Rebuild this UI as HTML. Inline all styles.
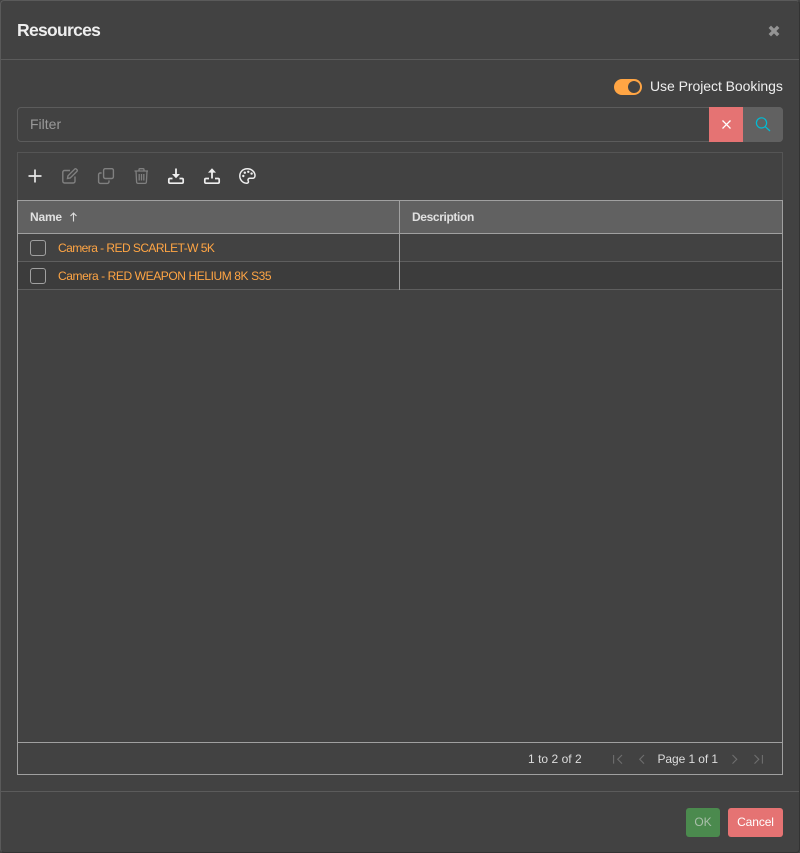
<!DOCTYPE html>
<html><head><meta charset="utf-8"><style>
html,body{margin:0;padding:0;width:800px;height:853px;overflow:hidden;background:#424242;font-family:"Liberation Sans",sans-serif}
.a{position:absolute;white-space:nowrap}
#m{position:absolute;left:0;top:0;width:798px;height:851px;border:1px solid #5a5a5a;border-right-color:#333;border-bottom-color:#333;border-radius:4px;box-sizing:content-box}
svg{position:absolute;overflow:visible;fill:none}
</style></head><body>
<div id="m"></div>
<div class="a" style="left:17px;top:20px;font-size:17.5px;line-height:21px;font-weight:bold;color:#eee;letter-spacing:-.7px">Resources</div>
<svg style="left:768px;top:25px" width="12" height="12" viewBox="0 0 12 12"><path d="M1.8 1.8 10.2 10.2M10.2 1.8 1.8 10.2" stroke="#949494" stroke-width="3.4"/></svg>
<div class="a" style="left:1px;top:59px;width:798px;height:1px;background:#5b5b5b"></div>

<div class="a" style="left:614px;top:79px;width:28px;height:16px;border-radius:8px;background:#ffa544"></div>
<div class="a" style="left:628px;top:81px;width:12px;height:12px;border-radius:6px;background:#424242"></div>
<div class="a" style="left:650px;top:78px;font-size:14px;line-height:16px;color:#eee;letter-spacing:-.05px">Use Project Bookings</div>

<div class="a" style="left:17px;top:107px;width:766px;height:35px;box-sizing:border-box;border:1px solid #5c5c5c;border-radius:4px"></div>
<div class="a" style="left:30px;top:116px;font-size:14px;line-height:16px;color:#999">Filter</div>
<div class="a" style="left:709px;top:107px;width:34px;height:35px;background:#e57373"></div>
<div class="a" style="left:743px;top:107px;width:40px;height:35px;background:#616161;border-radius:0 4px 4px 0"></div>
<svg style="left:722px;top:120px" width="9" height="9" viewBox="0 0 9 9"><path d="M.5 .5 8.5 8.5M8.5 .5 .5 8.5" stroke="#fff" stroke-width="1.3"/></svg>
<svg style="left:755px;top:116px" width="16" height="16" viewBox="0 0 16 16"><circle cx="6.5" cy="6.9" r="5.1" stroke="#00bcd4" stroke-width="1.2"/><path d="M10.3 10.7 15 15" stroke="#00bcd4" stroke-width="1.3"/></svg>

<div class="a" style="left:17px;top:152px;width:766px;height:48px;box-sizing:border-box;border:1px solid #555;border-bottom:0"></div>
<svg style="left:28px;top:169px" width="14" height="14" viewBox="0 0 14 14"><path d="M7 .5V13.5M.5 7H13.5" stroke="#e6e6e6" stroke-width="1.7"/></svg>
<svg style="left:62px;top:168px" width="16" height="16" viewBox="0 0 16 16"><path d="M8 2.5H2.5A1.7 1.7 0 0 0 .8 4.2V13.3A1.7 1.7 0 0 0 2.5 15H11.3A1.7 1.7 0 0 0 13 13.3V8.5" stroke="#808080" stroke-width="1.4"/><path d="M5.5 10.5 6 7.8 12.6 1.2A1.1 1.1 0 0 1 14.4 1.2L14.9 1.7A1.1 1.1 0 0 1 14.9 3.4L8.2 10Z" stroke="#808080" stroke-width="1.4"/></svg>
<svg style="left:98px;top:168px" width="16" height="16" viewBox="0 0 16 16"><rect x="5.6" y=".7" width="9.8" height="9.8" rx="1.6" stroke="#808080" stroke-width="1.4"/><path d="M3.6 5H2.2A1.6 1.6 0 0 0 .6 6.6V13.8A1.6 1.6 0 0 0 2.2 15.4H9.4A1.6 1.6 0 0 0 11 13.8V12.4" stroke="#808080" stroke-width="1.4"/></svg>
<svg style="left:134px;top:168px" width="15" height="16" viewBox="0 0 15 16"><path d="M.5 3H14M5 3V1.7A1 1 0 0 1 6 .7H9A1 1 0 0 1 10 1.7V3M2 3 2.6 14A1.5 1.5 0 0 0 4.1 15.4H10.9A1.5 1.5 0 0 0 12.4 14L13 3M5.2 6V12.5M7.5 6V12.5M9.8 6V12.5" stroke="#808080" stroke-width="1.3"/></svg>
<svg style="left:168px;top:168px" width="16" height="16" viewBox="0 0 16 16"><path d="M8 .5V8.5" stroke="#eee" stroke-width="1.8"/><path d="M4 6 8 10.2 12 6Z" fill="#eee"/><path d="M4.5 10.5H2A1.2 1.2 0 0 0 .8 11.7V14A1.2 1.2 0 0 0 2 15.2H14A1.2 1.2 0 0 0 15.2 14V11.7A1.2 1.2 0 0 0 14 10.5H11.5" stroke="#eee" stroke-width="1.7"/></svg>
<svg style="left:204px;top:168px" width="16" height="16" viewBox="0 0 16 16"><path d="M8 3V10.5" stroke="#eee" stroke-width="1.8"/><path d="M4 4.6 8 .3 12 4.6Z" fill="#eee"/><path d="M5 10.5H2A1.2 1.2 0 0 0 .8 11.7V14A1.2 1.2 0 0 0 2 15.2H14A1.2 1.2 0 0 0 15.2 14V11.7A1.2 1.2 0 0 0 14 10.5H11" stroke="#eee" stroke-width="1.7"/></svg>
<svg style="left:239px;top:168px" width="17" height="16" viewBox="0 0 17 16"><path d="M8.3.8C3.9.8.8 4 .8 8S4 15.2 7.6 15.2C9.6 15.2 9.7 13.8 9.2 12.8 8.6 11.4 9.4 10.3 10.8 10.3H13.4C15 10.3 16 9.2 16 7.6 16 3.8 12.6.8 8.3.8Z" stroke="#eee" stroke-width="1.5"/><circle cx="4.3" cy="8" r="1.2" fill="#eee"/><circle cx="5.8" cy="4.7" r="1.2" fill="#eee"/><circle cx="9.3" cy="3.8" r="1.2" fill="#eee"/><circle cx="12.6" cy="5.6" r="1.2" fill="#eee"/></svg>

<div class="a" style="left:18px;top:201px;width:764px;height:32px;background:#616161"></div>
<div class="a" style="left:18px;top:234px;width:764px;height:27px;background:#424242"></div>
<div class="a" style="left:18px;top:262px;width:764px;height:27px;background:#3c3c3c"></div>
<div class="a" style="left:17px;top:200px;width:766px;height:575px;box-sizing:border-box;border:1px solid #a0a0a0"></div>
<div class="a" style="left:18px;top:233px;width:764px;height:1px;background:#a0a0a0"></div>
<div class="a" style="left:18px;top:261px;width:764px;height:1px;background:#5e5e5e"></div>
<div class="a" style="left:18px;top:289px;width:764px;height:1px;background:#5e5e5e"></div>
<div class="a" style="left:399px;top:201px;width:1px;height:89px;background:#a0a0a0"></div>
<div class="a" style="left:30px;top:210px;font-size:12px;line-height:14px;font-weight:bold;color:#e0e0e0;letter-spacing:-.2px">Name</div>
<svg style="left:69px;top:212px" width="9" height="10" viewBox="0 0 9 10"><path d="M4.5 1V9.5M1.5 4 4.5 1 7.5 4" stroke="#ddd" stroke-width="1.1"/></svg>
<div class="a" style="left:412px;top:210px;font-size:12px;line-height:14px;font-weight:bold;color:#e0e0e0;letter-spacing:-.37px">Description</div>
<div class="a" style="left:30px;top:240px;width:16px;height:16px;box-sizing:border-box;border:1px solid #a0a0a0;border-radius:3px"></div>
<div class="a" style="left:30px;top:268px;width:16px;height:16px;box-sizing:border-box;border:1px solid #a0a0a0;border-radius:3px"></div>
<div class="a" style="left:58px;top:241px;font-size:12px;line-height:14px;color:#ffa544;letter-spacing:-.55px">Camera - RED SCARLET-W 5K</div>
<div class="a" style="left:58px;top:269px;font-size:12px;line-height:14px;color:#ffa544;letter-spacing:-.41px">Camera - RED WEAPON HELIUM 8K S35</div>

<div class="a" style="left:18px;top:742px;width:764px;height:1px;background:#a0a0a0"></div>
<div class="a" style="left:528px;top:752px;font-size:12px;line-height:14px;color:#ddd;letter-spacing:.03px">1 to 2 of 2</div>
<div class="a" style="left:657.5px;top:752px;font-size:12px;line-height:14px;color:#ddd;letter-spacing:-.08px">Page 1 of 1</div>
<svg style="left:613px;top:755px" width="10" height="9" viewBox="0 0 10 9"><path d="M.6 0V8.6M9 0 4.7 4.3 9 8.6" stroke="#6e6e6e" stroke-width="1.1"/></svg>
<svg style="left:639px;top:755px" width="6" height="9" viewBox="0 0 6 9"><path d="M5 0 .7 4.3 5 8.6" stroke="#6e6e6e" stroke-width="1.1"/></svg>
<svg style="left:732px;top:755px" width="6" height="9" viewBox="0 0 6 9"><path d="M.5 0 4.8 4.3 .5 8.6" stroke="#6e6e6e" stroke-width="1.1"/></svg>
<svg style="left:754px;top:755px" width="10" height="9" viewBox="0 0 10 9"><path d="M.5 0 4.8 4.3 .5 8.6M8.4 0V8.6" stroke="#6e6e6e" stroke-width="1.1"/></svg>

<div class="a" style="left:1px;top:791px;width:798px;height:1px;background:#5b5b5b"></div>
<div class="a" style="left:686px;top:808px;width:34px;height:29px;background:#4b8a4e;border-radius:3px;text-align:center;font-size:12px;line-height:29px;color:#a9bfaa">OK</div>
<div class="a" style="left:728px;top:808px;width:55px;height:29px;background:#e57373;border-radius:3px;text-align:center;font-size:12px;line-height:29px;color:#fff;letter-spacing:-.1px">Cancel</div>
</body></html>
